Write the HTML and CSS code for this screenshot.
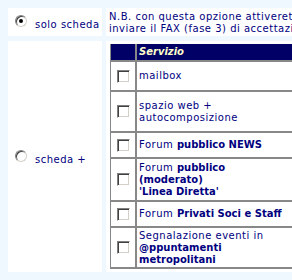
FILE: index.html
```html
<!DOCTYPE html>
<html>

<head>
    <meta charset="UTF-8">
    <title>Attivazione servizi</title>
    <link rel="stylesheet" href="styles.css">
</head>

<body>
    <div id="main">
        <div class="opt">
            <label class="choice"><span class="radio checked"></span>solo scheda</label>
        </div>
        <div class="note">
            N.B. con questa opzione attiverete la sola scheda e potrete<br>
            inviare il FAX (fase 3) di accettazione in un secondo momento.
        </div>
        <div class="opt">
            <label class="choice"><span class="radio"></span>scheda +</label>
        </div>
        <div class="services">
            <table id="svcList">
                <tr class="head">
                    <td class="chk"></td>
                    <td>Servizio</td>
                </tr>
                <tr class="r-mail">
                    <td class="chk"><span class="box"></span></td>
                    <td>mailbox</td>
                </tr>
                <tr class="r-web">
                    <td class="chk"><span class="box"></span></td>
                    <td>spazio web +<br>autocomposizione</td>
                </tr>
                <tr class="r-news">
                    <td class="chk"><span class="box"></span></td>
                    <td>Forum <b>pubblico NEWS</b></td>
                </tr>
                <tr class="r-linea">
                    <td class="chk"><span class="box"></span></td>
                    <td>Forum <b>pubblico<br>(moderato)<br>'Linea Diretta'</b></td>
                </tr>
                <tr class="r-soci">
                    <td class="chk"><span class="box"></span></td>
                    <td>Forum <b>Privati Soci e Staff</b></td>
                </tr>
                <tr class="r-eventi">
                    <td class="chk"><span class="box"></span></td>
                    <td>Segnalazione eventi in<br><b>@ppuntamenti<br>metropolitani</b></td>
                </tr>
            </table>
        </div>
    </div>
</body>

</html>
```

FILE: styles.css
```css
html,
body {
    margin: 0;
    padding: 0;
}

body {
    background-color: #f0f8ff;
    overflow: hidden;
    font-family: "DejaVu Sans", Verdana, sans-serif;
    font-size: 10px;
    line-height: 12px;
    letter-spacing: 0.5px;
    color: #000080;
}

b {
    letter-spacing: 0;
}

#main {
    display: grid;
    grid-template-columns: 94px 600px;
    grid-template-rows: 28px auto;
    gap: 5px 4px;
    padding: 8px;
}

.opt {
    background-color: #fff;
    display: flex;
    align-items: center;
    padding-left: 7px;
}

.choice {
    display: block;
}

/* radio stile windows classico */
.radio {
    display: inline-block;
    box-sizing: border-box;
    width: 12px;
    height: 12px;
    margin: 2px 8px 0 0;
    vertical-align: 1px;
    border-radius: 50%;
    border: 1px solid;
    border-color: #808080 #d4d0c8 #d4d0c8 #808080;
    box-shadow: inset 1px 1px 0 #404040;
    background-color: #fff;
    position: relative;
}

.radio.checked::after {
    content: "";
    position: absolute;
    left: 3px;
    top: 3px;
    width: 4px;
    height: 4px;
    border-radius: 50%;
    background-color: #000;
}

.note {
    background-color: #fff;
    padding: 3px;
    white-space: nowrap;
}

.services {
    background-color: #fff;
    padding: 3px 4px;
}

#svcList {
    width: 100%;
    border-collapse: separate;
    border-spacing: 0;
    border-left: 1px solid #888;
}

#svcList td {
    border-bottom: 2px solid #888;
    padding: 0 2px;
    vertical-align: middle;
    white-space: nowrap;
}

#svcList td.chk {
    width: 24px;
    padding: 0;
    border-right: 2px solid #888;
}

#svcList .head td {
    background-color: #000066;
    color: #ffffcc;
    font-weight: bold;
    font-style: italic;
    letter-spacing: 0;
}

.box {
    display: block;
    box-sizing: border-box;
    width: 13px;
    height: 13px;
    margin: 0 auto;
    border: 1px solid;
    border-color: #808080 #fff #fff #808080;
    box-shadow: inset 1px 1px 0 #404040, inset -1px -1px 0 #d4d0c8;
    background-color: #fff;
}

.head {
    height: 18px;
}

.r-mail {
    height: 30px;
}

.r-web,
.r-eventi {
    height: 41px;
}

.r-news,
.r-soci {
    height: 26px;
}

.r-linea {
    height: 43px;
}
```
